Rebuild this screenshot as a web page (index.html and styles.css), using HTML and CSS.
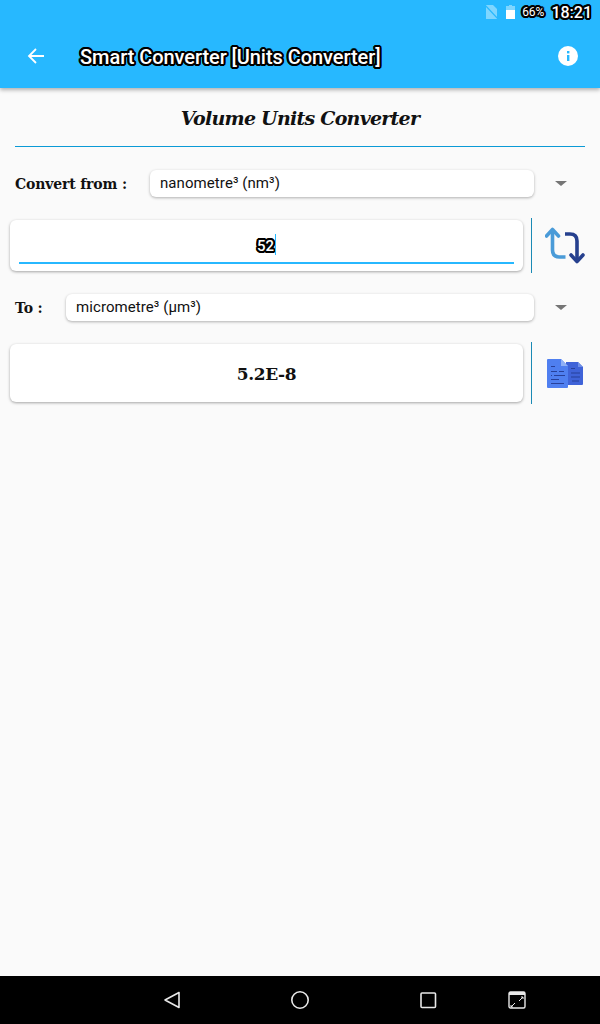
FILE: index.html
```html
<!DOCTYPE html>
<html lang="en">

<head>
    <meta charset="UTF-8">
    <meta name="viewport" content="width=device-width, initial-scale=1.0">
    <title>Smart Converter</title>
    <link rel="stylesheet" href="styles.css">
</head>

<body>
    <header class="app-bar">
        <div class="status-bar">
            <svg class="status-sim" width="13" height="14" viewBox="0 0 13 14">
                <path d="M1 0h7l4 4v10H1z" fill="#7fd6ff" />
                <path d="M0 0l13 14" stroke="#27b8ff" stroke-width="1.2" />
            </svg>
            <svg class="status-battery" width="9" height="14" viewBox="0 0 9 14">
                <path d="M3 0h3v1h3v13H0V1h3z" fill="#7fd6ff" />
                <rect y="5" width="9" height="9" fill="#fff" />
            </svg>
            <span class="status-percent outlined">66%</span>
            <span class="status-time outlined">18:21</span>
        </div>
        <div class="tool-bar">
            <svg class="back-icon" width="18" height="18" viewBox="0 0 18 18">
                <path d="M17 9H2M9 2L2 9l7 7" fill="none" stroke="#fff" stroke-width="1.8" />
            </svg>
            <h1 class="app-title outlined">Smart Converter [Units Converter]</h1>
            <svg class="info-icon" width="20" height="20" viewBox="0 0 20 20">
                <circle cx="10" cy="10" r="10" fill="#fff" />
                <rect x="9" y="9" width="2.4" height="6" fill="#27b8ff" />
                <rect x="9" y="5" width="2.4" height="2.4" fill="#27b8ff" />
            </svg>
        </div>
    </header>

    <main class="content">
        <h2 class="page-title">Volume Units Converter</h2>

        <div class="select-row from-row">
            <label class="select-label">Convert from :</label>
            <div class="select-box">nanometre³ (nm³)</div>
            <span class="select-arrow"></span>
        </div>

        <div class="value-row input-row">
            <div class="card">
                <div class="input-value"><span class="outlined">52</span><span class="caret"></span></div>
            </div>
            <div class="divider"></div>
            <svg class="side-icon" width="42" height="38" viewBox="0 0 42 38">
                <path d="M7.500 4v19q0 7 7 7h6" fill="none" stroke="#4a9bd8" stroke-width="3.600" />
                <path d="M1.500 9L7.500 2.500 13.500 9" fill="none" stroke="#4a9bd8" stroke-width="3.600" stroke-linejoin="round" stroke-linecap="round" />
                <path d="M20 7h5q7 0 7 7v20" fill="none" stroke="#26408e" stroke-width="3.600" />
                <path d="M26 28l6 6.500 6-6.500" fill="none" stroke="#26408e" stroke-width="3.600" stroke-linejoin="round" stroke-linecap="round" />
            </svg>
        </div>

        <div class="select-row to-row">
            <label class="select-label">To :</label>
            <div class="select-box">micrometre³ (µm³)</div>
            <span class="select-arrow"></span>
        </div>

        <div class="value-row result-row">
            <div class="card result-card">5.2E-8</div>
            <div class="divider"></div>
            <svg class="side-icon doc-icon" width="37" height="29" viewBox="0 0 37 29">
                <path d="M19 3h12l5 5v17a1 1 0 0 1-1 1H19z" fill="#3f63d8" />
                <path d="M31 3l5 5h-5z" fill="#6f8fe8" />
                <path d="M1 0h13l7 7v21a1 1 0 0 1-1 1H1a1 1 0 0 1-1-1V1a1 1 0 0 1 1-1z" fill="#4f7ff0" />
                <path d="M14 0l7 7h-7z" fill="#8fb0f6" />
                <path d="M4 7.500h4M4 12.500h6M12 12.500h5M4 16.500h1M7 16.500h11M4 20.500h8M4 24.500h13M24 9.500h4M24 14h9M24 18h9M25 22h7" stroke="#27409a" stroke-width="1" />
            </svg>
        </div>
    </main>

    <footer class="nav-bar">
        <svg class="nav-icon" width="18" height="18" viewBox="0 0 18 18">
            <path d="M16 1.500v15L2 9z" fill="none" stroke="#e8e8e8" stroke-width="1.600" stroke-linejoin="round" />
        </svg>
        <svg class="nav-icon" width="20" height="20" viewBox="0 0 20 20">
            <circle cx="10" cy="10" r="8.200" fill="none" stroke="#e8e8e8" stroke-width="1.600" />
        </svg>
        <svg class="nav-icon" width="18" height="18" viewBox="0 0 18 18">
            <rect x="2" y="2" width="14.500" height="14.500" rx="1" fill="none" stroke="#e8e8e8" stroke-width="1.600" />
        </svg>
        <svg class="nav-icon split-icon" width="18" height="18" viewBox="0 0 18 18">
            <rect x="1" y="1" width="16" height="16" rx="1.500" fill="none" stroke="#e8e8e8" stroke-width="1.400" />
            <rect x="1" y="1" width="16" height="3" fill="#e8e8e8" />
            <path d="M11 10l4-4M13 6h2v2M7 12l-4 4M3 14v2h2" fill="none" stroke="#e8e8e8" />
        </svg>
    </footer>
</body>

</html>
```

FILE: styles.css
```css
* {
    box-sizing: border-box;
}

body {
    margin: 0;
    height: 1024px;
    display: flex;
    flex-direction: column;
    overflow: hidden;
    background-color: #fafafa;
    font-family: Roboto, sans-serif;
}

.outlined {
    color: #fff;
    text-shadow: -1px -1px 0 #000, 0 -1px 0 #000, 1px -1px 0 #000, -1px 0 0 #000,
        1px 0 0 #000, -1px 1px 0 #000, 0 1px 0 #000, 1px 1px 0 #000,
        -2px 0 0 #000, 2px 0 0 #000, 0 2px 0 #000, 0 -2px 0 #000,
        -2px -1px 0 #000, 2px -1px 0 #000, -2px 1px 0 #000, 2px 1px 0 #000,
        -1px -2px 0 #000, 1px -2px 0 #000, -1px 2px 0 #000, 1px 2px 0 #000;
}

.app-bar {
    height: 88px;
    background-color: #27b8ff;
    box-shadow: 0 2px 4px rgba(0, 0, 0, 0.3);
}

.status-bar {
    height: 24px;
    display: flex;
    align-items: center;
    justify-content: flex-end;
    padding-right: 8px;
}

.status-sim {
    margin-right: 8px;
}

.status-battery {
    margin-right: 7px;
}

.status-percent {
    font-size: 12px;
    margin-right: 7px;
}

.status-time {
    font-size: 16px;
    font-weight: 500;
}

.tool-bar {
    height: 64px;
    display: flex;
    align-items: center;
    padding: 0 22px 0 27px;
}

.app-title {
    flex: 1;
    margin: 2px 0 0 35px;
    font-size: 20px;
    font-weight: 500;
    letter-spacing: -0.06px;
}

.content {
    flex: 1;
    padding: 0 10px;
}

.page-title {
    margin: 0 5px;
    height: 59px;
    padding-top: 15px;
    border-bottom: 1px solid #0b9ad6;
    text-align: center;
    font-family: "DejaVu Serif", serif;
    font-style: italic;
    font-size: 19px;
    letter-spacing: -0.75px;
    line-height: 31px;
    font-weight: bold;
    color: #111;
}

.select-row {
    display: flex;
    align-items: center;
    height: 27px;
    padding: 0 23px 0 5px;
}

.from-row {
    margin-top: 23px;
}

.to-row {
    margin-top: 23px;
}

.select-label {
    font-family: "DejaVu Serif", serif;
    font-weight: bold;
    font-size: 14px;
    letter-spacing: -0.15px;
    color: #111;
}

.from-row .select-label {
    width: 135px;
}

.to-row .select-label {
    width: 51px;
}

.select-box {
    flex: 1;
    height: 27px;
    padding-left: 10px;
    line-height: 27px;
    font-size: 15px;
    letter-spacing: 0.08px;
    color: #111;
    background-color: #fff;
    border-radius: 6px;
    box-shadow: 0 1px 3px rgba(0, 0, 0, 0.3);
}

.select-arrow {
    margin-left: 21px;
    border-top: 5px solid #757575;
    border-left: 6px solid transparent;
    border-right: 6px solid transparent;
}

.value-row {
    display: flex;
    align-items: center;
}

.input-row {
    margin-top: 23px;
}

.result-row {
    margin-top: 23px;
}

.card {
    width: 513px;
    background-color: #fff;
    border-radius: 6px;
    box-shadow: 0 1px 3px rgba(0, 0, 0, 0.35);
}

.input-row .card {
    height: 51px;
    padding: 0 9px;
}

.input-value {
    height: 44px;
    padding-top: 14px;
    display: flex;
    justify-content: center;
    border-bottom: 2px solid #27b8ff;
    font-size: 15px;
    font-weight: 500;
    line-height: 24px;
}

.caret {
    width: 1px;
    height: 21px;
    margin-left: 1px;
    background-color: #27b8ff;
}

.result-card {
    height: 58px;
    line-height: 60px;
    text-align: center;
    font-family: "DejaVu Serif", serif;
    font-weight: bold;
    font-size: 17px;
    letter-spacing: -0.4px;
    color: #111;
}

.divider {
    width: 1px;
    margin-left: 8px;
    background-color: #1a8ab5;
    align-self: stretch;
    margin-top: -2px;
    margin-bottom: -2px;
}

.side-icon {
    margin-left: 13px;
}

.doc-icon {
    margin-left: 15px;
}

.nav-bar {
    height: 48px;
    background-color: #000;
    display: flex;
    align-items: center;
    padding-left: 163px;
    gap: 109px;
}

.nav-bar .split-icon {
    margin-left: -38px;
}
```
